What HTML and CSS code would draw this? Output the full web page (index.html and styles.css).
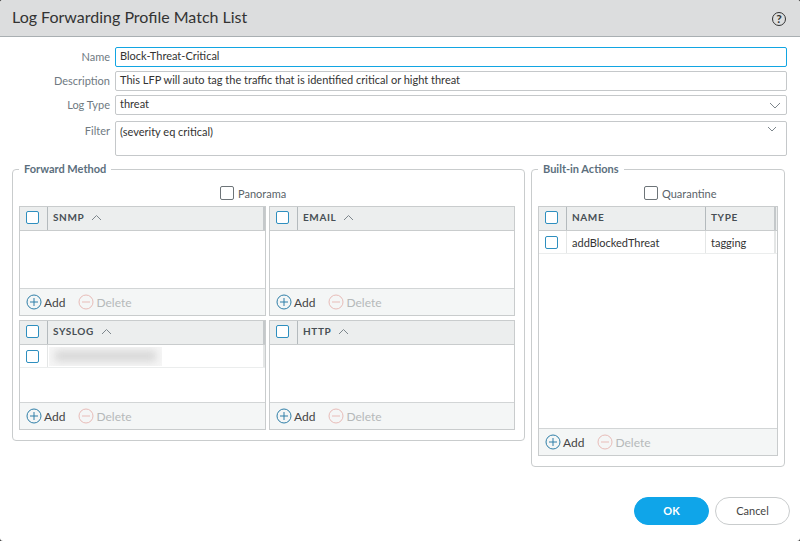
FILE: index.html
```html
<!DOCTYPE html>
<html>
<head>
	<meta charset="UTF-8">
	<title>Log Forwarding Profile Match List</title>
	<link rel="stylesheet" href="styles.css">
</head>
<body>
<div class="dialog">
	<div class="title-bar">
		<span class="title">Log Forwarding Profile Match List</span>
		<span class="help">?</span>
	</div>
	<div class="form">
		<div class="row">
			<label>Name</label>
			<div class="input focus">Block-Threat-Critical</div>
		</div>
		<div class="row">
			<label>Description</label>
			<div class="input">This LFP will auto tag the traffic that is identified critical or hight threat</div>
		</div>
		<div class="row">
			<label>Log Type</label>
			<div class="input">threat
				<svg class="chev" width="12" height="7" viewBox="0 0 12 7"><path d="M1 1l5 5 5-5" fill="none" stroke="#7d868c"/></svg>
			</div>
		</div>
		<div class="row row-filter">
			<label>Filter</label>
			<div class="input area">(severity eq critical)
				<svg class="chev chev-small" width="10" height="6" viewBox="0 0 10 6"><path d="M1 1l4 4 4-4" fill="none" stroke="#7d868c"/></svg>
			</div>
		</div>
	</div>
	<div class="groups">
		<fieldset class="group group-forward">
			<legend>Forward Method</legend>
			<div class="check-line line-panorama"><i class="box"></i>Panorama</div>
			<div class="tables">
				<div class="table">
					<div class="thead">
						<div class="cell-check"><i class="box blue"></i></div>
						<div class="th wide edge">SNMP<svg class="up" width="11" height="7" viewBox="0 0 11 7"><path d="M1 6l4.5-4.5 4.5 4.5" fill="none" stroke="#7d868c"/></svg></div>
					</div>
					<div class="tbody"></div>
					<div class="tfoot">
						<span class="act"><svg width="16" height="16" viewBox="0 0 16 16"><circle cx="8" cy="8" r="7" fill="none" stroke="#2f7fa8"/><path d="M8 4v8M4 8h8" stroke="#2f7fa8"/></svg>Add</span>
						<span class="act off"><svg width="16" height="16" viewBox="0 0 16 16"><circle cx="8" cy="8" r="7" fill="none" stroke="#e8bcb8"/><path d="M4 8h8" stroke="#e8bcb8"/></svg>Delete</span>
					</div>
				</div>
				<div class="table">
					<div class="thead">
						<div class="cell-check"><i class="box blue"></i></div>
						<div class="th wide">EMAIL<svg class="up" width="11" height="7" viewBox="0 0 11 7"><path d="M1 6l4.5-4.5 4.5 4.5" fill="none" stroke="#7d868c"/></svg></div>
					</div>
					<div class="tbody"></div>
					<div class="tfoot">
						<span class="act"><svg width="16" height="16" viewBox="0 0 16 16"><circle cx="8" cy="8" r="7" fill="none" stroke="#2f7fa8"/><path d="M8 4v8M4 8h8" stroke="#2f7fa8"/></svg>Add</span>
						<span class="act off"><svg width="16" height="16" viewBox="0 0 16 16"><circle cx="8" cy="8" r="7" fill="none" stroke="#e8bcb8"/><path d="M4 8h8" stroke="#e8bcb8"/></svg>Delete</span>
					</div>
				</div>
				<div class="table">
					<div class="thead">
						<div class="cell-check"><i class="box blue"></i></div>
						<div class="th wide edge">SYSLOG<svg class="up" width="11" height="7" viewBox="0 0 11 7"><path d="M1 6l4.5-4.5 4.5 4.5" fill="none" stroke="#7d868c"/></svg></div>
					</div>
					<div class="tbody">
						<div class="tr">
							<div class="cell-check"><i class="box blue"></i></div>
							<div class="td wide edge"><div class="redact"><div class="smear"></div></div></div>
						</div>
					</div>
					<div class="tfoot">
						<span class="act"><svg width="16" height="16" viewBox="0 0 16 16"><circle cx="8" cy="8" r="7" fill="none" stroke="#2f7fa8"/><path d="M8 4v8M4 8h8" stroke="#2f7fa8"/></svg>Add</span>
						<span class="act off"><svg width="16" height="16" viewBox="0 0 16 16"><circle cx="8" cy="8" r="7" fill="none" stroke="#e8bcb8"/><path d="M4 8h8" stroke="#e8bcb8"/></svg>Delete</span>
					</div>
				</div>
				<div class="table">
					<div class="thead">
						<div class="cell-check"><i class="box blue"></i></div>
						<div class="th wide">HTTP<svg class="up" width="11" height="7" viewBox="0 0 11 7"><path d="M1 6l4.5-4.5 4.5 4.5" fill="none" stroke="#7d868c"/></svg></div>
					</div>
					<div class="tbody"></div>
					<div class="tfoot">
						<span class="act"><svg width="16" height="16" viewBox="0 0 16 16"><circle cx="8" cy="8" r="7" fill="none" stroke="#2f7fa8"/><path d="M8 4v8M4 8h8" stroke="#2f7fa8"/></svg>Add</span>
						<span class="act off"><svg width="16" height="16" viewBox="0 0 16 16"><circle cx="8" cy="8" r="7" fill="none" stroke="#e8bcb8"/><path d="M4 8h8" stroke="#e8bcb8"/></svg>Delete</span>
					</div>
				</div>
			</div>
		</fieldset>
		<fieldset class="group group-actions">
			<legend>Built-in Actions</legend>
			<div class="check-line line-quarantine"><i class="box"></i>Quarantine</div>
			<div class="table table-tall">
				<div class="thead">
					<div class="cell-check"><i class="box blue"></i></div>
					<div class="th col-name">NAME</div>
					<div class="th col-type">TYPE</div>
				</div>
				<div class="tbody">
					<div class="tr">
						<div class="cell-check"><i class="box blue"></i></div>
						<div class="td col-name">addBlockedThreat</div>
						<div class="td col-type">tagging</div>
					</div>
				</div>
				<div class="tfoot">
					<span class="act"><svg width="16" height="16" viewBox="0 0 16 16"><circle cx="8" cy="8" r="7" fill="none" stroke="#2f7fa8"/><path d="M8 4v8M4 8h8" stroke="#2f7fa8"/></svg>Add</span>
					<span class="act off"><svg width="16" height="16" viewBox="0 0 16 16"><circle cx="8" cy="8" r="7" fill="none" stroke="#e8bcb8"/><path d="M4 8h8" stroke="#e8bcb8"/></svg>Delete</span>
				</div>
			</div>
		</fieldset>
	</div>
	<div class="buttons">
		<div class="btn ok">OK</div>
		<div class="btn">Cancel</div>
	</div>
</div>
</body>
</html>
```
FILE: styles.css
```css
html,body{
	margin: 0;
	height: 100%;
	background: #3c3c3c;
}
body{
	font-family: Lato, "Open Sans", sans-serif;
	font-size: 11px;
	color: #333;
}
.dialog{
	height: 541px;
	display: flex;
	flex-direction: column;
	overflow: hidden;
	background: #fff;
	border-radius: 3px;
}
.title-bar{
	height: 36px;
	flex: none;
	display: flex;
	align-items: center;
	justify-content: space-between;
	padding: 0 14px 0 12px;
	background: #dcddde;
	border-bottom: 1px solid #a9afb2;
}
.title{
	margin-bottom: 3px;
	font-size: 16px;
	color: #333;
}
.help{
	width: 12px;
	height: 12px;
	margin-top: 2px;
	line-height: 12px;
	border: 1.5px solid #333;
	border-radius: 50%;
	text-align: center;
	font-size: 12px;
	font-weight: bold;
}
.form{
	padding: 10px 13px 0 0;
	display: flex;
	flex-direction: column;
	gap: 4px;
}
.row{
	display: flex;
}
.row-filter{
	margin-top: 2px;
}
.row-filter label{
	line-height: 17px;
}
.row label{
	width: 110px;
	margin-right: 5px;
	flex: none;
	text-align: right;
	line-height: 19px;
	color: #6f7a82;
}
.input{
	flex: 1;
	position: relative;
	box-sizing: border-box;
	height: 20px;
	line-height: 16px;
	padding: 0 4px;
	background: #fff;
	border: 1px solid #c5c8ca;
	border-radius: 2px;
	color: #333;
}
.input.focus{
	border-color: #12a5e2;
}
.input.area{
	height: 35px;
	padding-top: 2px;
}
.chev{
	position: absolute;
	right: 5px;
	top: 6px;
}
.chev-small{
	right: 9px;
	top: 4px;
}
.groups{
	margin-top: 6px;
	padding-left: 12px;
	display: flex;
	align-items: flex-start;
	gap: 6px;
}
.group{
	margin: 0;
	min-width: 0;
	box-sizing: border-box;
	border: 1px solid #c9cccd;
	border-radius: 4px;
	padding: 10px 8px 10px 6px;
}
.group-forward{
	width: 513px;
}
.group-actions{
	width: 254px;
	padding-right: 6px;
}
.group legend{
	padding: 0 5px;
	line-height: 14px;
	font-size: 11px;
	font-weight: bold;
	color: #5c6f7d;
}
.check-line{
	display: flex;
	align-items: center;
	height: 14px;
	margin-bottom: 6px;
	color: #5a6369;
}
.line-panorama{
	padding-left: 201px;
}
.line-quarantine{
	padding-left: 106px;
}
.box{
	display: block;
	flex: none;
	box-sizing: border-box;
	width: 14px;
	height: 14px;
	margin-right: 4px;
	border: 1px solid #6d7478;
	border-radius: 2px;
	background: #fff;
}
.box.blue{
	width: 13px;
	height: 13px;
	margin: 0;
	border: 1.5px solid #2e8fbf;
}
.tables{
	display: grid;
	grid-template-columns: 247px 246px;
	grid-auto-rows: 110px;
	gap: 4px 3px;
}
.table{
	box-sizing: border-box;
	display: flex;
	flex-direction: column;
	border: 1px solid #c9cccd;
}
.table-tall{
	height: 250px;
}
.thead{
	display: flex;
	flex: none;
	height: 23px;
	background: #eceeee;
	border-bottom: 1px solid #c9cccd;
}
.tbody{
	flex: 1;
	background: #fff;
}
.tr{
	display: flex;
	height: 22px;
	border-bottom: 1px solid #ebeded;
}
.cell-check{
	width: 28px;
	flex: none;
	display: flex;
	align-items: center;
	justify-content: center;
	box-sizing: border-box;
	padding-right: 2px;
	border-right: 1px solid #b4babd;
}
.thead .cell-check{
	padding-bottom: 2px;
}
.tr .cell-check{
	border-right-color: #e4e6e6;
}
.th,.td{
	box-sizing: border-box;
	display: flex;
	align-items: center;
	padding-left: 5px;
}
.th{
	padding-bottom: 3px;
	font-size: 10px;
	font-weight: bold;
	letter-spacing: 0.6px;
	color: #474f55;
}
.wide{
	flex: 1;
}
.th.edge{
	border-right: 2px solid #c4c8ca;
}
.td.edge{
	border-right: 2px solid #e4e6e6;
}
.up{
	margin-left: 7px;
}
.col-name{
	width: 139px;
	border-right: 1px solid #b4babd;
}
.col-type{
	width: 70px;
	border-right: 2px solid #c4c8ca;
}
.td.col-name{
	border-right-color: #e4e6e6;
}
.td.col-type{
	border-right-color: #e4e6e6;
}
.redact{
	width: 113px;
	height: 19px;
	margin-left: -4px;
	overflow: hidden;
	background: #f6f6f6;
}
.smear{
	height: 10px;
	margin: 4px 6px;
	background: #d4d4d4;
	filter: blur(4px);
}
.tfoot{
	display: flex;
	flex: none;
	align-items: center;
	height: 27px;
	box-sizing: border-box;
	padding-left: 6px;
	gap: 13px;
	background: #f4f6f6;
	border-top: 1px solid #d2d5d6;
}
.act{
	display: flex;
	align-items: center;
	gap: 2px;
	font-size: 12px;
	color: #444;
}
.act.off{
	color: #b6b9ba;
}
.buttons{
	margin-top: auto;
	padding: 0 10px 16px 0;
	display: flex;
	justify-content: flex-end;
	gap: 6px;
}
.btn{
	box-sizing: border-box;
	width: 75px;
	height: 28px;
	line-height: 25px;
	text-align: center;
	border: 1px solid #c9cccd;
	border-radius: 14px;
	color: #444;
}
.btn.ok{
	background: #0fa5e9;
	border-color: #0fa5e9;
	color: #fff;
	font-weight: bold;
}
```
